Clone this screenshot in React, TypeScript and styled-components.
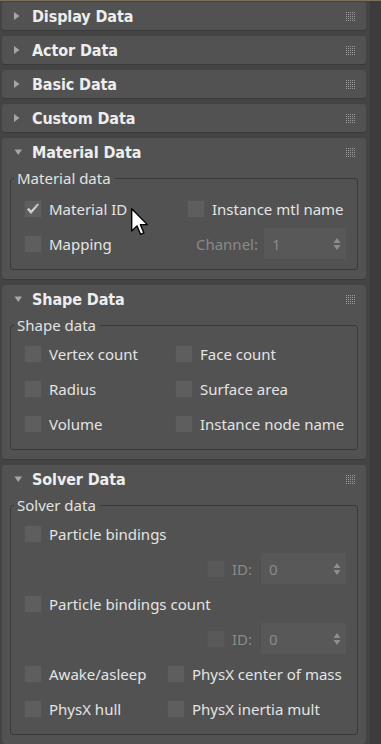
import React from "react";
import styled, { createGlobalStyle } from "styled-components";

const GlobalStyle = createGlobalStyle`
  html, body { margin: 0; padding: 0; background: #444444; }
  * { box-sizing: border-box; }
`;

const Frame = styled.div`
  position: relative;
  width: 381px;
  height: 744px;
  overflow: hidden;
  display: flex;
  flex-direction: column;
  background: #444444;
  font-family: "Noto Sans", "Open Sans", sans-serif;
`;

const TopLine = styled.div`
  height: 1px;
  flex-shrink: 0;
  background: #7a705c;
`;

const Main = styled.div`
  flex: 1;
  display: flex;
  min-height: 0;
`;

const Stack = styled.div`
  flex: 1;
  display: flex;
  flex-direction: column;
  gap: 6px;
  padding: 1px 4px 0 2px;
`;

const ScrollStrip = styled.div`
  width: 11px;
  flex-shrink: 0;
  background: #3c3c3c;
`;

const Rollout = styled.section`
  flex-shrink: 0;
  background: #525252;
  border-radius: 3px;
  box-shadow: 0 1px 0 #3a3a3a;
`;

const Header = styled.div`
  height: 28px;
  display: flex;
  align-items: center;
  padding: 0 11px 0 11px;
`;

const Title = styled.span`
  margin-left: 9px;
  padding-top: 1px;
  font-family: "DejaVu Sans Condensed", "DejaVu Sans", Verdana, sans-serif;
  font-weight: bold;
  font-size: 16px;
  letter-spacing: -0.1px;
  color: #ededed;
`;

const GripIcon = styled.svg`
  margin-left: auto;
  display: block;
`;

const Body = styled.div`
  padding: 0 8px 9px;
`;

const Group = styled.fieldset<{ $top: number }>`
  margin: 3px 0 0;
  padding: ${(p) => p.$top}px 11px 8px 13px;
  border: 1px solid #393939;
  border-radius: 3px;
  min-width: 0;
`;

const Legend = styled.legend`
  padding: 0 4px 0 3px;
  margin-left: -10px;
  font-size: 15px;
  line-height: 18px;
  color: #e2e2e2;
`;

const Grid = styled.div<{ $col: number }>`
  display: grid;
  grid-template-columns: ${(p) => p.$col}px 1fr;
  grid-auto-rows: 35px;
`;

const Check = styled.label<{ $dim?: boolean }>`
  display: flex;
  align-items: center;
  gap: 7px;
  font-size: 15px;
  white-space: nowrap;
  color: ${(p) => (p.$dim ? "#8a8a8a" : "#e4e4e4")};
`;

const Box = styled.span<{ $dim?: boolean }>`
  width: 18px;
  height: 18px;
  flex-shrink: 0;
  display: flex;
  align-items: center;
  justify-content: center;
  background: ${(p) => (p.$dim ? "#595959" : "#5e5e5e")};
  border: 1px solid #545454;
`;

const SpinCell = styled.div<{ $span?: boolean; $start?: boolean }>`
  ${(p) => (p.$span ? "grid-column: 1 / -1;" : "")}
  display: flex;
  align-items: center;
  justify-content: ${(p) => (p.$start ? "flex-start" : "flex-end")};
`;

const SpinLabel = styled.span`
  font-size: 15px;
  color: #8a8a8a;
  white-space: nowrap;
`;

const Spinner = styled.div<{ $w: number; $gap: number }>`
  width: ${(p) => p.$w}px;
  height: 31px;
  margin-left: ${(p) => p.$gap}px;
  background: #585858;
  display: flex;
  align-items: center;
  padding: 0 5px 0 8px;
  font-size: 15px;
  color: #8a8a8a;
`;

const SpinValue = styled.span`
  flex: 1;
`;

const Cursor = styled.svg`
  position: absolute;
  left: 131px;
  top: 208px;
`;

function Arrow({ open }: { open?: boolean }) {
  return open ? (
    <svg width="10" height="10" viewBox="0 0 10 10" style={{ display: "block" }}>
      <polygon points="1.5,2.5 9,2.5 5.25,8" fill="#a6a6a6" />
    </svg>
  ) : (
    <svg width="10" height="10" viewBox="0 0 10 10" style={{ display: "block" }}>
      <polygon points="1,1 6.5,5 1,9" fill="#a6a6a6" />
    </svg>
  );
}

function Grip() {
  const dots: React.ReactNode[] = [];
  for (let r = 0; r < 5; r++)
    for (let c = 0; c < 5; c++)
      dots.push(<rect key={`${r}-${c}`} x={c * 2} y={r * 2} width="1" height="1" fill="#9c9c9c" />);
  return (
    <GripIcon width="9" height="9" viewBox="0 0 9 9">
      {dots}
    </GripIcon>
  );
}

function Tick() {
  return (
    <svg width="14" height="14" viewBox="0 0 14 14">
      <path d="M1.5,7.5 L5,11.5 L12.5,2.5 L11.5,2 L5,9 L2.8,6.3 Z" fill="#cfcfcf" stroke="#cfcfcf" strokeWidth="1" strokeLinejoin="round" />
    </svg>
  );
}

function SpinArrows() {
  return (
    <svg width="8" height="14" viewBox="0 0 8 14">
      <polygon points="4,1 7.5,6 0.5,6" fill="#8e8e8e" />
      <polygon points="0.5,8 7.5,8 4,13" fill="#8e8e8e" />
    </svg>
  );
}

function CheckItem({ label, checked }: { label: string; checked?: boolean }) {
  return (
    <Check>
      <Box>{checked ? <Tick /> : null}</Box>
      {label}
    </Check>
  );
}

function RolloutHead({ title, open }: { title: string; open?: boolean }) {
  return (
    <Header>
      <Arrow open={open} />
      <Title>{title}</Title>
      <Grip />
    </Header>
  );
}

function IdRow() {
  return (
    <SpinCell $span>
      <Check $dim>
        <Box $dim />
        <SpinLabel>ID:</SpinLabel>
      </Check>
      <Spinner $w={85} $gap={9}>
        <SpinValue>0</SpinValue>
        <SpinArrows />
      </Spinner>
    </SpinCell>
  );
}

export default function App() {
  return (
    <>
      <GlobalStyle />
      <Frame>
        <TopLine />
        <Main>
          <Stack>
            <Rollout>
              <RolloutHead title="Display Data" />
            </Rollout>
            <Rollout>
              <RolloutHead title="Actor Data" />
            </Rollout>
            <Rollout>
              <RolloutHead title="Basic Data" />
            </Rollout>
            <Rollout>
              <RolloutHead title="Custom Data" />
            </Rollout>

            <Rollout>
              <RolloutHead title="Material Data" open />
              <Body>
                <Group $top={4}>
                  <Legend>Material data</Legend>
                  <Grid $col={163}>
                    <CheckItem label="Material ID" checked />
                    <CheckItem label="Instance mtl name" />
                    <CheckItem label="Mapping" />
                    <SpinCell>
                      <SpinLabel>Channel:</SpinLabel>
                      <Spinner $w={82} $gap={6}>
                        <SpinValue>1</SpinValue>
                        <SpinArrows />
                      </Spinner>
                    </SpinCell>
                  </Grid>
                </Group>
              </Body>
            </Rollout>

            <Rollout>
              <RolloutHead title="Shape Data" open />
              <Body>
                <Group $top={2}>
                  <Legend>Shape data</Legend>
                  <Grid $col={151}>
                    <CheckItem label="Vertex count" />
                    <CheckItem label="Face count" />
                    <CheckItem label="Radius" />
                    <CheckItem label="Surface area" />
                    <CheckItem label="Volume" />
                    <CheckItem label="Instance node name" />
                  </Grid>
                </Group>
              </Body>
            </Rollout>

            <Rollout>
              <RolloutHead title="Solver Data" open />
              <Body>
                <Group $top={2}>
                  <Legend>Solver data</Legend>
                  <Grid $col={143}>
                    <SpinCell $span $start>
                      <CheckItem label="Particle bindings" />
                    </SpinCell>
                    <IdRow />
                    <SpinCell $span $start>
                      <CheckItem label="Particle bindings count" />
                    </SpinCell>
                    <IdRow />
                    <CheckItem label="Awake/asleep" />
                    <CheckItem label="PhysX center of mass" />
                    <CheckItem label="PhysX hull" />
                    <CheckItem label="PhysX inertia mult" />
                  </Grid>
                </Group>
              </Body>
            </Rollout>
          </Stack>
          <ScrollStrip />
        </Main>
        <Cursor width="18" height="28" viewBox="0 0 13 20">
          <path d="M0.5,0.5 L0.5,16.5 L4.3,12.8 L6.9,18.9 L9.3,17.9 L6.8,11.9 L11.8,11.9 Z" fill="#ffffff" stroke="#000000" strokeWidth="1" strokeLinejoin="round" />
        </Cursor>
      </Frame>
    </>
  );
}
